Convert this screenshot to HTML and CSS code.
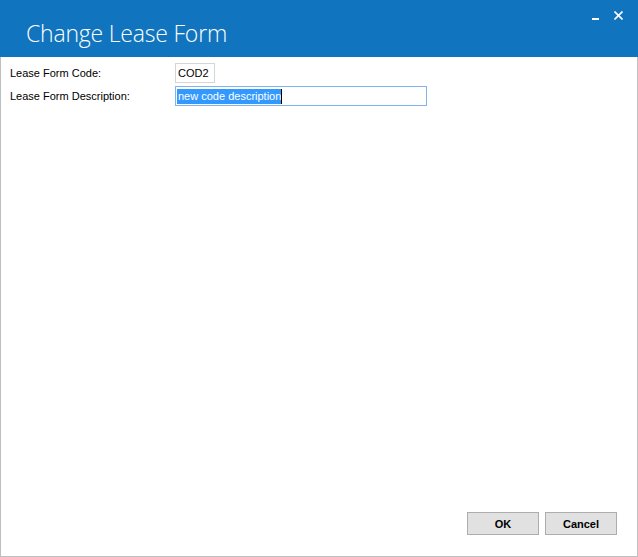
FILE: index.html
```html
<!DOCTYPE html>
<html>
<head>
<meta charset="utf-8">
<link rel="stylesheet" href="styles.css">
</head>
<body>
<div class="window">
  <div class="titlebar">
    <div class="title">Change Lease Form</div>
    <div class="controls">
      <span class="min"></span>
      <svg class="close" width="9" height="9" viewBox="0 0 9 9"><path d="M0.5 0.5L8.5 8.5M8.5 0.5L0.5 8.5" stroke="#fff" stroke-width="1.6" fill="none"/></svg>
    </div>
  </div>
  <div class="content">
    <div class="form">
      <div class="row">
        <label class="label">Lease Form Code:</label>
        <div class="input code">COD2</div>
      </div>
      <div class="row">
        <label class="label">Lease Form Description:</label>
        <div class="input desc focused"><span class="sel">new code description</span><span class="caret"></span></div>
      </div>
    </div>
    <div class="footer">
      <button class="btn">OK</button>
      <button class="btn">Cancel</button>
    </div>
  </div>
</div>
</body>
</html>
```

FILE: styles.css
```css
html, body {
  margin: 0;
  padding: 0;
  background: #ffffff;
}
.window {
  width: 638px;
  height: 557px;
  display: flex;
  flex-direction: column;
  font-family: "Liberation Sans", Arial, sans-serif;
  font-size: 11px;
  color: #000;
  box-sizing: border-box;
}
.titlebar {
  height: 57px;
  flex: 0 0 57px;
  background: #1174be;
  display: flex;
  justify-content: space-between;
  box-sizing: border-box;
}
.title {
  font-family: "Open Sans", "Noto Sans", sans-serif;
  font-weight: 300;
  font-size: 23px;
  color: #ffffff;
  padding-left: 26px;
  padding-top: 17px;
  line-height: 32px;
  letter-spacing: -0.2px;
}
.controls {
  display: flex;
  align-items: flex-start;
  padding-top: 11px;
  padding-right: 15px;
}
.min {
  display: block;
  width: 7px;
  height: 2px;
  background: #fff;
  margin-top: 7px;
  margin-right: 15px;
}
.close {
  display: block;
}
.content {
  flex: 1;
  display: flex;
  flex-direction: column;
  justify-content: space-between;
  border: 1px solid #bfbfbf;
  border-top: none;
}
.form {
  padding-top: 6px;
  padding-left: 9px;
  display: flex;
  flex-direction: column;
  gap: 3px;
}
.row {
  display: flex;
  align-items: center;
  height: 20px;
}
.label {
  width: 165px;
  flex: 0 0 165px;
}
.input {
  height: 20px;
  box-sizing: border-box;
  border: 1px solid #d5d5d5;
  padding-left: 2px;
  display: flex;
  align-items: center;
  line-height: 14px;
  font-size: 11px;
}
.code {
  width: 40px;
}
.desc {
  width: 252px;
  padding-left: 1px;
}
.focused {
  border-color: #7eb4ea;
}
.sel {
  background: #3399ff;
  color: #fff;
  padding-left: 1px;
  line-height: 15px;
}
.caret {
  display: inline-block;
  width: 1px;
  height: 15px;
  background: #000;
}
.footer {
  display: flex;
  justify-content: flex-end;
  gap: 6px;
  padding-right: 20px;
  padding-bottom: 21px;
}
.btn {
  width: 72px;
  height: 23px;
  background: #e1e1e1;
  border: 1px solid #adadad;
  font-family: "Liberation Sans", Arial, sans-serif;
  font-weight: bold;
  font-size: 11px;
  color: #000;
  padding: 0;
  margin: 0;
}
```
